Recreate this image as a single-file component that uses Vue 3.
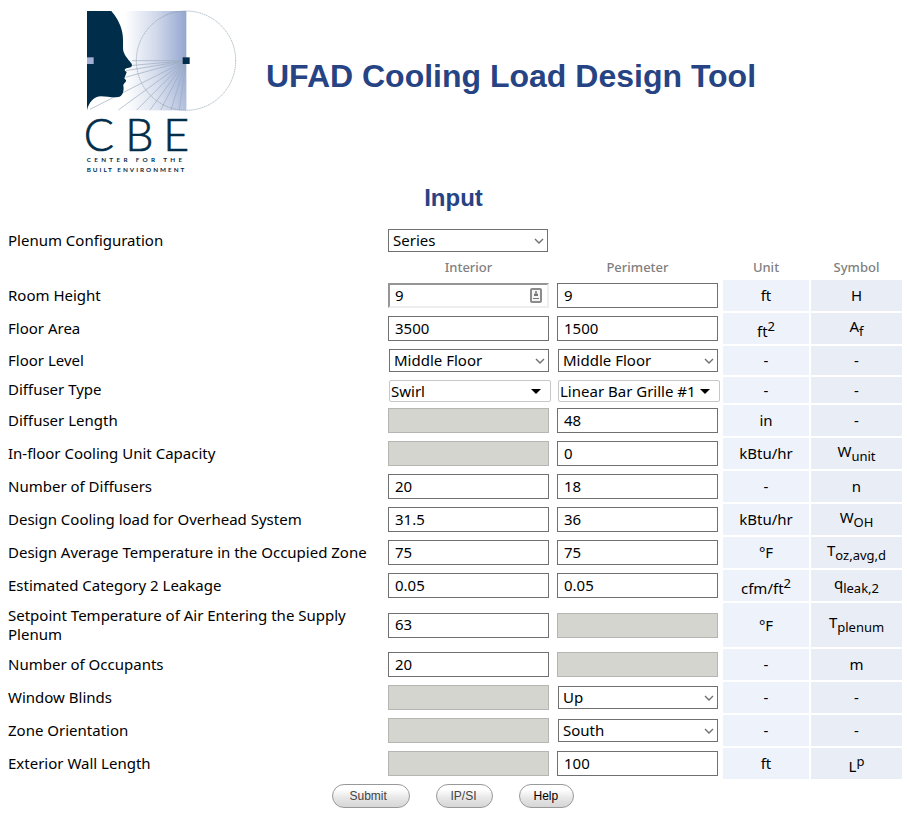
<script setup>
import { reactive, ref } from 'vue'

const plenum = ref('Series')

const text = (value, extra = {}) => ({ kind: 'text', value, ...extra })
const select = (value, options) => ({ kind: 'select', value, options })
const combo = (value, options) => ({ kind: 'combo', value, options })
const off = () => ({ kind: 'off', value: '' })

const floors = ['Ground Floor', 'Middle Floor', 'Top Floor']

const rows = reactive([
  { id: 'height', label: 'Room Height', interior: text('9', { card: true }), perimeter: text('9'), unit: 'ft', symbol: 'H' },
  { id: 'area', label: 'Floor Area', interior: text('3500'), perimeter: text('1500'), unit: 'ft', unitSup: '2', symbol: 'A', sub: 'f' },
  { id: 'level', label: 'Floor Level', interior: select('Middle Floor', floors), perimeter: select('Middle Floor', floors), unit: '-', symbol: '-' },
  { id: 'diffuser', label: 'Diffuser Type', interior: combo('Swirl', ['Swirl', 'Square']), perimeter: combo('Linear Bar Grille #1', ['Linear Bar Grille #1', 'Linear Bar Grille #2']), unit: '-', symbol: '-' },
  { id: 'length', label: 'Diffuser Length', interior: off(), perimeter: text('48'), unit: 'in', symbol: '-' },
  { id: 'capacity', label: 'In-floor Cooling Unit Capacity', interior: off(), perimeter: text('0'), unit: 'kBtu/hr', symbol: 'W', sub: 'unit' },
  { id: 'count', label: 'Number of Diffusers', interior: text('20'), perimeter: text('18'), unit: '-', symbol: 'n' },
  { id: 'load', label: 'Design Cooling load for Overhead System', interior: text('31.5'), perimeter: text('36'), unit: 'kBtu/hr', symbol: 'W', sub: 'OH' },
  { id: 'average', label: 'Design Average Temperature in the Occupied Zone', interior: text('75'), perimeter: text('75'), unit: '°F', symbol: 'T', sub: 'oz,avg,d' },
  { id: 'leakage', label: 'Estimated Category 2 Leakage', interior: text('0.05'), perimeter: text('0.05'), unit: 'cfm/ft', unitSup: '2', symbol: 'q', sub: 'leak,2' },
  { id: 'setpoint', label: 'Setpoint Temperature of Air Entering the Supply Plenum', interior: text('63'), perimeter: off(), unit: '°F', symbol: 'T', sub: 'plenum' },
  { id: 'occupants', label: 'Number of Occupants', interior: text('20'), perimeter: off(), unit: '-', symbol: 'm' },
  { id: 'blinds', label: 'Window Blinds', interior: off(), perimeter: select('Up', ['Up', 'Down']), unit: '-', symbol: '-' },
  { id: 'orientation', label: 'Zone Orientation', interior: off(), perimeter: select('South', ['North', 'East', 'South', 'West']), unit: '-', symbol: '-' },
  { id: 'wall', label: 'Exterior Wall Length', interior: off(), perimeter: text('100'), unit: 'ft', symbol: 'L', sup: 'p' }
])

const zones = ['interior', 'perimeter']
const rayEnds = [
  [186, 182], [178, 197], [168, 212], [166, 232], [60, 328], [145, 330], [200, 330],
  [240, 330], [272, 330], [303, 330], [328, 330]
]
</script>

<template>
  <main class="page">
    <header class="masthead">
      <svg class="logo" viewBox="39 30 462 489" role="img" aria-label="CBE Center for the Built Environment">
        <defs>
          <linearGradient id="sky" x1="0" x2="1" y1="0" y2="0">
            <stop offset="0.38" stop-color="#ffffff" />
            <stop offset="0.7" stop-color="#d0d8ea" />
            <stop offset="1" stop-color="#94a6d0" />
          </linearGradient>
          <linearGradient id="floor" x1="0" x2="0" y1="0" y2="1">
            <stop offset="0.5" stop-color="#ffffff" stop-opacity="0" />
            <stop offset="1" stop-color="#ffffff" stop-opacity="0.3" />
          </linearGradient>
        </defs>
        <rect x="51" y="33" width="298" height="298" fill="url(#sky)" />
        <rect x="51" y="33" width="298" height="298" fill="url(#floor)" />
        <g stroke="#9aabbd" stroke-width="2">
          <line v-for="([x, y], i) in rayEnds" :key="i" x1="348" y1="182" :x2="x" :y2="y" />
        </g>
        <circle cx="348" cy="182" r="149" fill="none" stroke="#8298a4" stroke-width="2" stroke-dasharray="4 2" />
        <path
          fill="#002d49"
          d="M51 33H124C136 47 152 70 157 98C161 121 158 140 160 153C164 168 178 182 185 191C188 197 184 202 177 203C170 204 164 205 164 211L170 217L163 235L168 241C170 247 159 250 160 258C162 266 161 281 152 288C141 296 115 290 93 289C73 289 56 307 51 331Z"
        />
        <rect x="51" y="172" width="20" height="20" fill="#a3b0d6" />
        <rect x="338" y="172" width="21" height="20" fill="#002d49" />
        <g class="wordmark">
          <text class="initials" x="41 166 280" y="453">CBE</text>
          <text class="fullname wide" x="50" y="486">CENTER FOR THE</text>
          <text class="fullname" x="50" y="516">BUILT ENVIRONMENT</text>
        </g>
      </svg>
      <h1>UFAD Cooling Load Design Tool</h1>
    </header>

    <form @submit.prevent>
      <h2>Input</h2>
      <table>
        <colgroup>
          <col />
          <col class="col-field" />
          <col class="col-field" />
          <col class="col-unit" />
          <col class="col-symbol" />
        </colgroup>
        <tbody>
          <tr>
            <td><label for="plenum">Plenum Configuration</label></td>
            <td>
              <span class="picker">
                <select id="plenum" v-model="plenum">
                  <option>Series</option>
                  <option>Reverse Series</option>
                  <option>Parallel</option>
                </select>
                <svg class="chevron" viewBox="0 0 10 6"><path d="M1 1L5 5L9 1" /></svg>
              </span>
            </td>
          </tr>
          <tr class="heads">
            <td></td>
            <th scope="col">Interior</th>
            <th scope="col">Perimeter</th>
            <th scope="col">Unit</th>
            <th scope="col">Symbol</th>
          </tr>
          <tr v-for="row in rows" :key="row.id" :class="{ compact: row.interior.kind === 'combo' }">
            <td>
              <label :for="row.id + (row.interior.kind === 'off' ? '-perimeter' : '-interior')">{{ row.label }}</label>
            </td>
            <td v-for="zone in zones" :key="zone">
              <span v-if="row[zone].kind === 'select'" class="picker inset">
                <select :id="row.id + '-' + zone" v-model="row[zone].value" :aria-label="row.label + ' ' + zone">
                  <option v-for="o in row[zone].options" :key="o">{{ o }}</option>
                </select>
                <svg class="chevron" viewBox="0 0 10 6"><path d="M1 1L5 5L9 1" /></svg>
              </span>
              <span v-else-if="row[zone].kind === 'combo'" class="picker combo">
                <select :id="row.id + '-' + zone" v-model="row[zone].value" :aria-label="row.label + ' ' + zone">
                  <option v-for="o in row[zone].options" :key="o">{{ o }}</option>
                </select>
                <svg class="triangle" viewBox="0 0 10 5"><path d="M0 0H10L5 5Z" /></svg>
              </span>
              <span v-else class="entry">
                <input
                  :id="row.id + '-' + zone"
                  v-model="row[zone].value"
                  type="text"
                  :class="{ sunken: row[zone].card }"
                  :disabled="row[zone].kind === 'off'"
                  :aria-label="row.label + ' ' + zone"
                />
                <svg v-if="row[zone].card" class="card" viewBox="0 0 12 15">
                  <rect x="1" y="1" width="10" height="13" rx="1" fill="#f4f4f4" stroke="#8c8c8c" stroke-width="2" />
                  <circle cx="6" cy="4" r="1" fill="#777" />
                  <path d="M4 8V6L6 5L8 6V8ZM3 10H9V11H3Z" fill="#777" />
                </svg>
              </span>
            </td>
            <td class="unit">{{ row.unit }}<sup v-if="row.unitSup">{{ row.unitSup }}</sup></td>
            <td class="symbol">{{ row.symbol }}<sub v-if="row.sub">{{ row.sub }}</sub><sup v-if="row.sup">{{ row.sup }}</sup></td>
          </tr>
        </tbody>
      </table>
      <div class="actions">
        <button class="submit" type="submit">Submit</button>
        <button class="units" type="button">IP/SI</button>
        <button class="help" type="button">Help</button>
      </div>
    </form>
  </main>
</template>

<style>
body {
  margin: 0;
  background: #fff;
}
</style>

<style scoped>
.page {
  padding: 10px 3px 8px;
  font-family: 'Trebuchet MS', 'Noto Sans', sans-serif;
  font-size: 15px;
  line-height: 19px;
  color: #000;
}

.masthead {
  display: flex;
  align-items: flex-start;
  gap: 29px;
  padding-left: 80px;
}

.logo {
  flex: none;
  width: 154px;
  height: 163px;
}

.wordmark {
  fill: #002d49;
  font-family: Lato, sans-serif;
}

.initials {
  font-size: 134px;
  font-weight: 300;
  stroke: #002d49;
  stroke-width: 2px;
}

.fullname {
  font-size: 19px;
  font-weight: 700;
  letter-spacing: 6px;
}

.fullname.wide {
  letter-spacing: 10px;
}

h1,
h2 {
  margin: 0;
  color: #264384;
  font-family: 'Liberation Sans', Arial, sans-serif;
  font-weight: 700;
}

h1 {
  padding-top: 48px;
  font-size: 32px;
  line-height: 36px;
}

h2 {
  padding: 11px 0 12px;
  font-size: 24px;
  line-height: 28px;
  text-align: center;
}

table {
  width: 100%;
  table-layout: fixed;
  border-spacing: 2px;
}

.col-field {
  width: 167px;
}

.col-unit {
  width: 86px;
}

.col-symbol {
  width: 91px;
}

td,
th {
  padding: 3px;
  vertical-align: middle;
}

.heads > * {
  height: 21px;
  padding: 0;
  color: #808080;
  font-size: 13px;
  font-weight: 500;
}

.compact td {
  padding-top: 3px;
  padding-bottom: 1px;
}

.compact td:first-child {
  padding-top: 1px;
  padding-bottom: 3px;
}

td.unit,
td.symbol {
  padding: 0;
  text-align: center;
}

.unit {
  background: #eef3fb;
}

.symbol {
  background: #e9edf6;
}

sub,
sup {
  font-size: 13px;
}

.picker,
.entry {
  display: grid;
  align-items: center;
}

.picker > *,
.entry > * {
  grid-area: 1 / 1;
}

.picker {
  width: 160px;
}

.picker.inset {
  margin-left: 1px;
}

.picker.combo {
  width: 162px;
  margin-left: 1px;
}

input,
select {
  box-sizing: border-box;
  width: 100%;
  margin: 0;
  border: 1px solid #707070;
  border-radius: 0;
  background: #fff;
  color: #000;
  font-family: inherit;
  font-size: 15px;
}

input {
  height: 25px;
  padding: 0 6px 2px;
}

input:disabled {
  border-color: #b4b6b1;
  background: #d4d5ce;
}

input.sunken {
  border: 2px solid #eee;
  border-top-color: #969696;
  border-left-color: #969696;
  padding: 0 5px 2px;
}

select {
  height: 23px;
  padding: 0 4px 2px;
  appearance: none;
}

.combo select {
  height: 22px;
  padding: 0 1px;
  border-color: #c8c8c8;
  border-radius: 2px;
}

.chevron,
.triangle,
.card {
  justify-self: end;
  pointer-events: none;
}

.chevron {
  width: 10px;
  height: 6px;
  margin-right: 4px;
  fill: none;
  stroke: #707070;
  stroke-width: 1.4;
}

.triangle {
  width: 10px;
  height: 5px;
  margin-right: 10px;
}

.card {
  width: 12px;
  height: 15px;
  margin-right: 7px;
}

.actions {
  display: flex;
  justify-content: center;
  gap: 26px;
  padding: 3px 2px 0 0;
}

button {
  height: 24px;
  padding: 0 17px;
  border: 1px solid #999;
  border-radius: 12px;
  background: linear-gradient(#fff 20%, #e6e6e6 60%, #d6d6d6);
  color: #444;
  font-family: 'Liberation Sans', Arial, sans-serif;
  font-size: 12px;
  text-align: left;
}

.submit {
  width: 78px;
}

.units {
  width: 57px;
  padding: 0 14px;
}

.help {
  width: 55px;
  padding: 0 14px;
  color: #000;
}
</style>
